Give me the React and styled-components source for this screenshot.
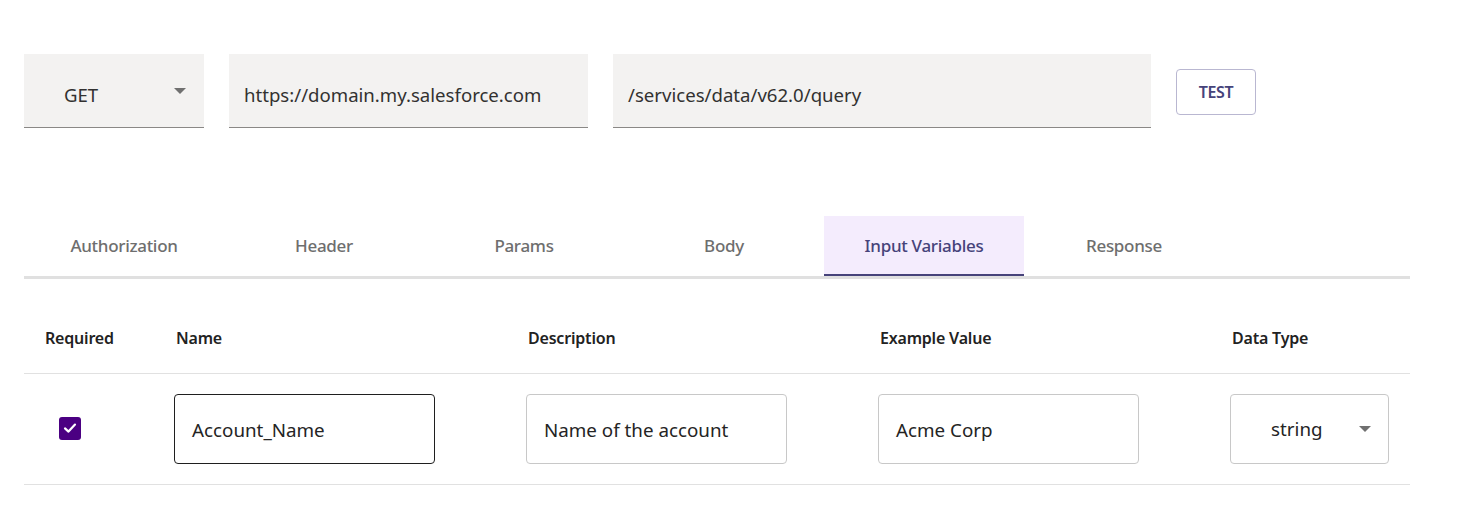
import React from "react";
import styled, { createGlobalStyle } from "styled-components";

const COLORS = {
  field: "#f3f2f1",
  fieldLine: "#8a8886",
  text: "#323130",
  tabText: "#6e6e6e",
  tabActiveText: "#46437a",
  tabActiveBg: "#f4ecfd",
  tabLine: "#e0e0e0",
  rowLine: "#e1e1e1",
  inputLine: "#c8c8c8",
  indigo: "#4b0082",
};

const TABS = ["Authorization", "Header", "Params", "Body", "Input Variables", "Response"];

const GlobalStyle = createGlobalStyle`
  body {
    margin: 0;
    background: #ffffff;
    font-family: "Noto Sans", "Open Sans", sans-serif;
    color: ${COLORS.text};
  }
`;

const Caret = () => (
  <svg width="12" height="6" viewBox="0 0 12 6">
    <path d="M0 0 L12 0 L6 6 Z" fill="#707070" />
  </svg>
);

const App = () => {
  return (
    <Page>
      <GlobalStyle />
      <TopBar>
        <MethodSelect>
          <span>GET</span>
          <Caret />
        </MethodSelect>
        <Field width={359}>https://domain.my.salesforce.com</Field>
        <Field width={538}>/services/data/v62.0/query</Field>
        <TestButton>TEST</TestButton>
      </TopBar>

      <TabList>
        {TABS.map((tab) => (
          <Tab key={tab} active={tab === "Input Variables"}>
            {tab}
          </Tab>
        ))}
      </TabList>

      <Table>
        <HeadRow>
          <HeadCell>Required</HeadCell>
          <HeadCell>Name</HeadCell>
          <HeadCell>Description</HeadCell>
          <HeadCell>Example Value</HeadCell>
          <HeadCell>Data Type</HeadCell>
        </HeadRow>
        <BodyRow>
          <CheckCell>
            <Checkbox>
              <svg width="16" height="16" viewBox="0 0 16 16">
                <path
                  d="M3 8.4 L6.5 11.6 L13 4.6"
                  fill="none"
                  stroke="#ffffff"
                  strokeWidth="2.2"
                  strokeLinecap="round"
                  strokeLinejoin="round"
                />
              </svg>
            </Checkbox>
          </CheckCell>
          <Cell>
            <TextBox focused>Account_Name</TextBox>
          </Cell>
          <Cell>
            <TextBox>Name of the account</TextBox>
          </Cell>
          <Cell>
            <TextBox>Acme Corp</TextBox>
          </Cell>
          <Cell>
            <TypeSelect>
              <span>string</span>
              <Caret />
            </TypeSelect>
          </Cell>
        </BodyRow>
      </Table>
    </Page>
  );
};

const Page = styled.div`
  padding: 54px 24px 0;
  width: 1386px;
`;

const TopBar = styled.div`
  display: flex;
  align-items: center;
  gap: 25px;
`;

const Field = styled.div`
  box-sizing: border-box;
  width: ${(p) => p.width}px;
  height: 74px;
  display: flex;
  align-items: center;
  padding: 7px 15px 0;
  background: ${COLORS.field};
  border-bottom: 1px solid ${COLORS.fieldLine};
  font-size: 18.6px;
  color: ${COLORS.text};
`;

const MethodSelect = styled(Field).attrs({ width: 180 })`
  justify-content: space-between;
  padding: 0 18px 0 40px;

  span {
    padding-top: 7px;
  }
`;

const TestButton = styled.button`
  width: 80px;
  height: 46px;
  margin-top: 1px;
  background: #ffffff;
  border: 1px solid #b9b7d1;
  border-radius: 4px;
  font-family: "Noto Sans", sans-serif;
  font-size: 16px;
  font-weight: 600;
  color: #46437a;
  letter-spacing: -0.4px;
`;

const TabList = styled.div`
  display: flex;
  margin-top: 88px;
  border-bottom: 3px solid ${COLORS.tabLine};
`;

const Tab = styled.div`
  box-sizing: border-box;
  width: 200px;
  height: 60px;
  display: flex;
  align-items: center;
  justify-content: center;
  padding-top: 1px;
  font-size: 17px;
  font-weight: 500;
  letter-spacing: -0.3px;
  color: ${(p) => (p.active ? COLORS.tabActiveText : COLORS.tabText)};
  background: ${(p) => (p.active ? COLORS.tabActiveBg : "transparent")};
  border-bottom: 2px solid ${(p) => (p.active ? COLORS.tabActiveText : "transparent")};
`;

const Table = styled.div`
  margin-top: 24px;
`;

const gridCols = `
  display: grid;
  grid-template-columns: 131px 352px 352px 352px 199px;
  border-bottom: 1px solid ${COLORS.rowLine};
`;

const HeadRow = styled.div`
  ${gridCols}
  height: 70px;
  align-items: center;
`;

const HeadCell = styled.div`
  padding: 0 20px 0 21px;
  font-size: 16px;
  font-weight: 600;
  color: #222222;
  letter-spacing: -0.2px;
`;

const BodyRow = styled.div`
  ${gridCols}
  height: 110px;
  align-items: center;
`;

const Cell = styled.div`
  padding: 0 20px 0 19px;
`;

const CheckCell = styled.div`
  padding: 0 0 2px 35px;
`;

const Checkbox = styled.div`
  width: 22px;
  height: 23px;
  border-radius: 3px;
  background: ${COLORS.indigo};
  display: flex;
  align-items: center;
  justify-content: center;
`;

const TextBox = styled.div`
  box-sizing: border-box;
  width: 261px;
  height: 70px;
  display: flex;
  align-items: center;
  padding: 1px 17px 0;
  border: 1px solid ${(p) => (p.focused ? "#1f1f1f" : COLORS.inputLine)};
  border-radius: 4px;
  font-size: 18.8px;
  color: #242424;
`;

const TypeSelect = styled(TextBox)`
  width: 159px;
  justify-content: space-between;
  padding: 0 17px 0 40px;
`;

export default App;
